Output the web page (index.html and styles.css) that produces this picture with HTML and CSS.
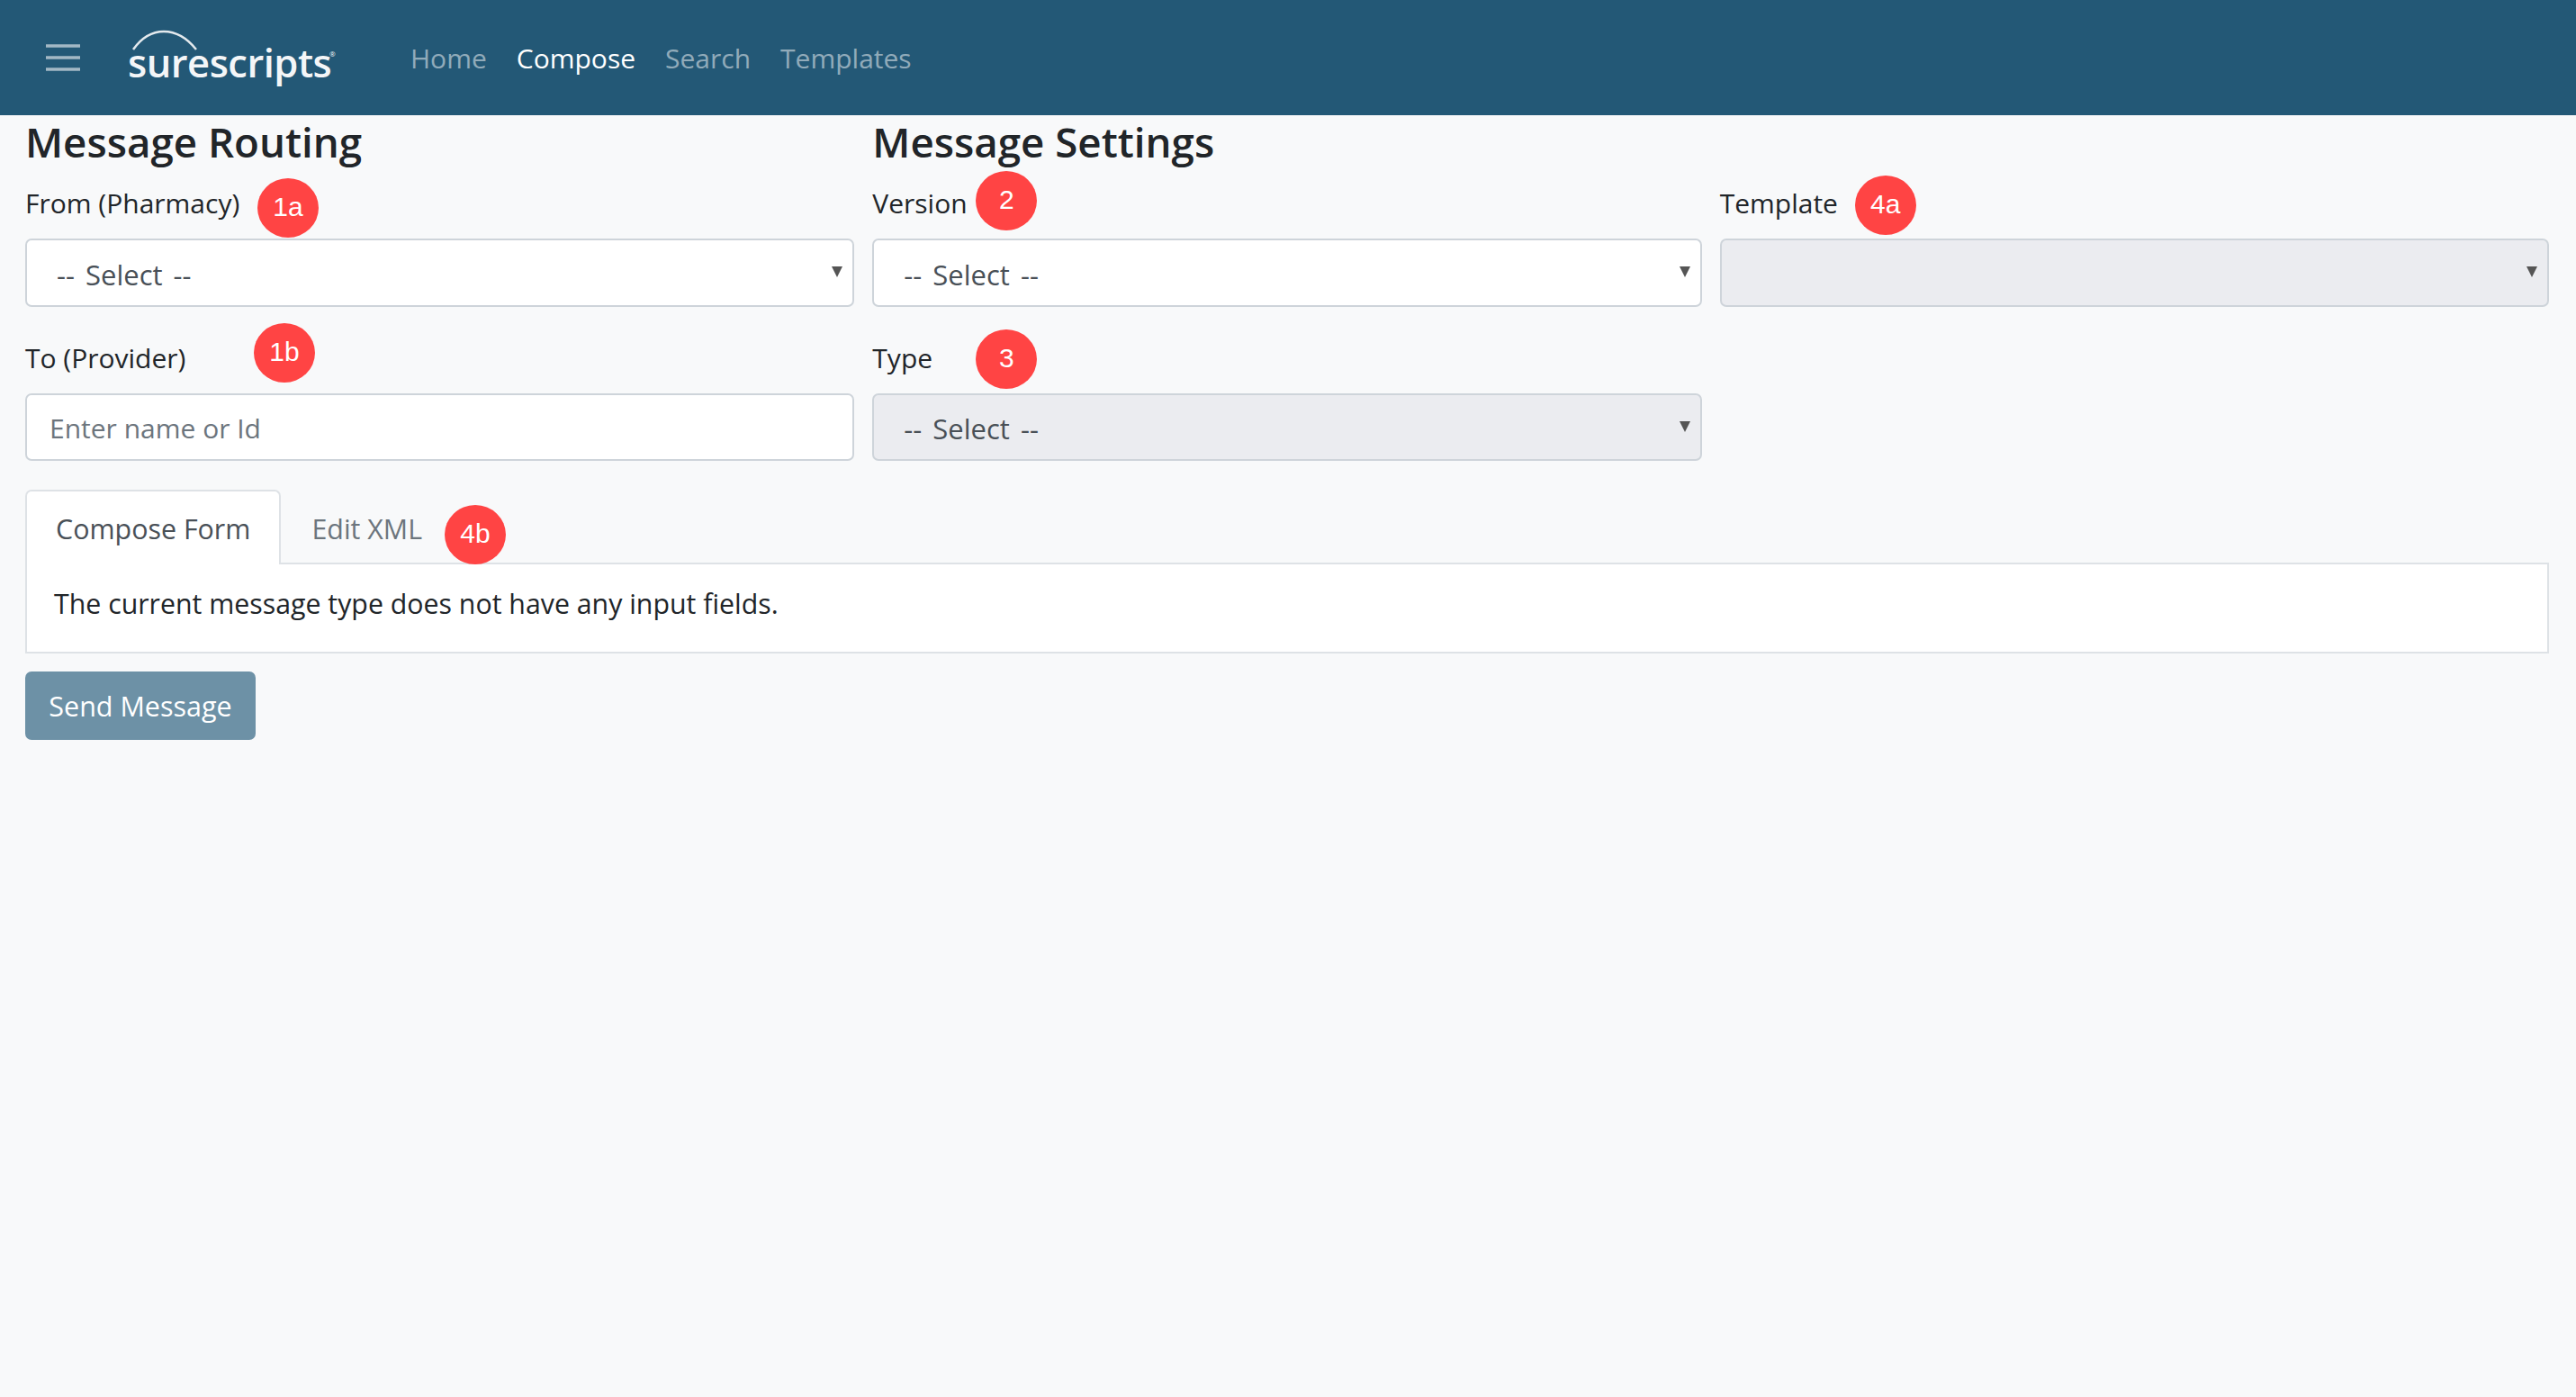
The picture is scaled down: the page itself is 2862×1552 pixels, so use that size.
FILE: index.html
```html
<!DOCTYPE html>
<html lang="en">

<head>
    <meta charset="UTF-8">
    <meta name="viewport" content="width=device-width, initial-scale=1.0">
    <title>Compose</title>
    <link rel="stylesheet" href="styles.css">
</head>

<body>

    <nav class="navbar">
        <svg class="menu-icon" width="38" height="30" viewBox="0 0 38 30">
            <path d="M0 2H38M0 15H38M0 28H38" stroke="#a3b8c5" stroke-width="3.5" stroke-linecap="round" fill="none" />
        </svg>
        <div class="logo">
            <svg class="logo-arc" width="74" height="24" viewBox="0 0 74 24">
                <path d="M2 22C14 5 26 2 36 2C48 2 60 7 72 22" stroke="#e4eaee" stroke-width="2.5" fill="none" />
            </svg>
            <span class="logo-text">surescripts</span>
            <span class="logo-mark">®</span>
        </div>
        <a class="nav-link" href="#">Home</a>
        <a class="nav-link active" href="#">Compose</a>
        <a class="nav-link" href="#">Search</a>
        <a class="nav-link" href="#">Templates</a>
    </nav>

    <main class="page">
        <div class="form-grid">
            <h3>Message Routing</h3>
            <h3>Message Settings</h3>
            <div></div>

            <div class="field">
                <label>From (Pharmacy)</label>
                <span class="badge badge-1a">1a</span>
                <div class="select-wrap">
                    <select>
                        <option>-- Select --</option>
                    </select>
                </div>
            </div>
            <div class="field">
                <label>Version</label>
                <span class="badge badge-2">2</span>
                <div class="select-wrap">
                    <select>
                        <option>-- Select --</option>
                    </select>
                </div>
            </div>
            <div class="field">
                <label>Template</label>
                <span class="badge badge-4a">4a</span>
                <div class="select-wrap">
                    <select disabled>
                        <option></option>
                    </select>
                </div>
            </div>

            <div class="field">
                <label>To (Provider)</label>
                <span class="badge badge-1b">1b</span>
                <input type="text" placeholder="Enter name or Id">
            </div>
            <div class="field">
                <label>Type</label>
                <span class="badge badge-3">3</span>
                <div class="select-wrap">
                    <select disabled>
                        <option>-- Select --</option>
                    </select>
                </div>
            </div>
        </div>

        <div class="tabs">
            <a class="tab active" href="#">Compose Form</a>
            <a class="tab" href="#">Edit XML</a>
            <span class="badge badge-4b">4b</span>
        </div>
        <div class="tab-panel">The current message type does not have any input fields.</div>

        <button type="button" class="send-btn" disabled>Send Message</button>
    </main>

</body>

</html>
```

FILE: styles.css
```css
* {
    box-sizing: border-box;
    margin: 0;
    padding: 0;
}

body {
    background-color: #f8f9fa;
    color: #212529;
    font-family: "Open Sans", Arial, sans-serif;
    font-size: 30px;
}

a {
    text-decoration: none;
}

.navbar {
    background-color: #235876;
    height: 128px;
    display: flex;
    align-items: center;
    padding-left: 51px;
}

.menu-icon {
    margin-right: 53px;
}

.logo {
    position: relative;
    width: 314px;
    height: 128px;
    display: flex;
    align-items: center;
}

.logo-arc {
    position: absolute;
    left: 4px;
    top: 33px;
}

.logo-text {
    color: #f4f6f8;
    font-size: 43.5px;
    font-weight: 600;
    margin-top: 10px;
    letter-spacing: -0.5px;
}

.logo-mark {
    position: absolute;
    left: 224px;
    top: 54px;
    color: #f4f6f8;
    font-size: 8px;
}

.nav-link {
    color: rgba(255, 255, 255, 0.5);
    margin-right: 33px;
}

.nav-link.active {
    color: white;
}

.page {
    padding: 0 30px 0 28px;
}

.form-grid {
    display: grid;
    grid-template-columns: repeat(3, 1fr);
    column-gap: 20px;
}

h3 {
    font-size: 45.7px;
    font-weight: 600;
    line-height: 58px;
    margin-bottom: 15px;
}

.field {
    position: relative;
    margin-bottom: 32px;
}

label {
    display: block;
    height: 46px;
    line-height: 50px;
    margin-bottom: 18px;
}

.select-wrap {
    position: relative;
}

.select-wrap::after {
    content: "";
    position: absolute;
    right: 13px;
    top: 31px;
    border-left: 6px solid transparent;
    border-right: 6px solid transparent;
    border-top: 12px solid #555;
}

select,
input {
    display: block;
    width: 100%;
    height: 75.5px;
    background-color: white;
    border: 2px solid #ced4da;
    border-radius: 7px;
    color: #495057;
    font-family: inherit;
    font-size: 30px;
}

select {
    appearance: none;
    padding: 4px 0 0 33px;
    font-size: 31px;
    word-spacing: 4px;
}

select:disabled {
    background-color: #ebecf0;
    opacity: 1;
}

input {
    padding: 2px 25px 0;
}

input::placeholder {
    color: #6c757d;
}

.tabs {
    position: relative;
    display: flex;
    height: 83px;
    border-bottom: 2px solid #dee2e6;
}

.tab {
    height: 83px;
    line-height: 84px;
    padding: 0 32px;
    border: 2px solid transparent;
    border-radius: 7px 7px 0 0;
    color: #6c757d;
    font-size: 30.4px;
}

.tab.active {
    background-color: white;
    border-color: #dee2e6;
    border-bottom: none;
    color: #495057;
}

.tab-panel {
    height: 99px;
    background-color: white;
    border: 2px solid #dee2e6;
    border-top: none;
    padding: 24px 30px 0;
    font-size: 30.3px;
    line-height: 39px;
}

.send-btn {
    display: block;
    width: 256px;
    height: 76px;
    margin-top: 20px;
    background-color: #6d91a6;
    border: none;
    border-radius: 7px;
    color: white;
    font-family: inherit;
    font-size: 30.5px;
}

.badge {
    position: absolute;
    width: 68px;
    height: 66px;
    border-radius: 50%;
    background-color: #ff4444;
    color: white;
    font-family: "Liberation Sans", Arial, sans-serif;
    font-size: 30px;
    line-height: 64px;
    text-align: center;
}

.badge-1a {
    left: 258px;
    top: -3px;
}

.badge-1b {
    left: 254px;
    top: -14px;
}

.badge-2 {
    left: 115px;
    top: -11px;
}

.badge-3 {
    left: 115px;
    top: -7px;
}

.badge-4a {
    left: 150px;
    top: -6px;
}

.badge-4b {
    left: 466px;
    top: 17px;
}
```
